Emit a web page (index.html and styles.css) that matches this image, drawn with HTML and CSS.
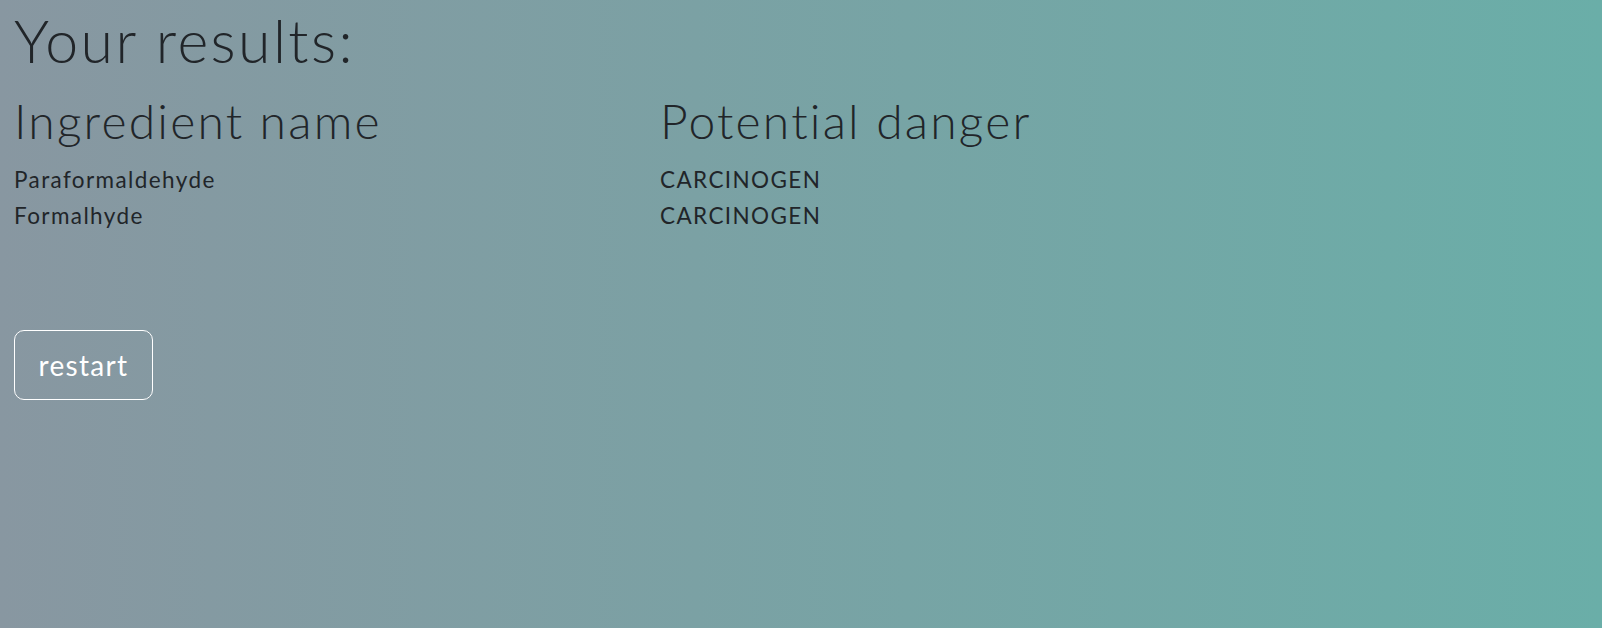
FILE: index.html
```html
<!DOCTYPE html>
<html lang="en">
<head>
<meta charset="utf-8">
<title>Your results</title>
<link rel="stylesheet" href="styles.css">
</head>
<body>
<main class="page">
  <h1 class="title">Your results:</h1>
  <div class="results">
    <h2 class="col-head">Ingredient name</h2>
    <h2 class="col-head">Potential danger</h2>
    <div class="cell">Paraformaldehyde</div>
    <div class="cell">CARCINOGEN</div>
    <div class="cell">Formalhyde</div>
    <div class="cell">CARCINOGEN</div>
  </div>
  <button class="restart" type="button">restart</button>
</main>
</body>
</html>
```
FILE: styles.css
```css
html, body {
  margin: 0;
  height: 100%;
}
body {
  background: linear-gradient(to right, #8897a1, #6aaea8);
  font-family: "Lato", "Open Sans", sans-serif;
  color: #212529;
}
.page {
  padding: 6px 14px 0 14px;
}
.title {
  margin: 0;
  font-size: 59px;
  font-weight: 300;
  line-height: 1.2;
  letter-spacing: 2.4px;
}
.results {
  display: grid;
  grid-template-columns: 646px auto;
  margin-top: 15px;
}
.col-head {
  margin: 0 0 13px 0;
  font-size: 48px;
  font-weight: 300;
  line-height: 1.2;
  letter-spacing: 2.2px;
}
.cell {
  font-size: 22.5px;
  line-height: 35.5px;
  font-weight: 400;
  letter-spacing: 1.4px;
}
.restart {
  margin-top: 97px;
  display: block;
  width: 139px;
  height: 70px;
  background: transparent;
  border: 1px solid #ffffff;
  border-radius: 10px;
  color: #ffffff;
  font-family: "Lato", "Open Sans", sans-serif;
  font-size: 28px;
  font-weight: 400;
  letter-spacing: 1.3px;
  padding: 0;
  cursor: pointer;
}
```
